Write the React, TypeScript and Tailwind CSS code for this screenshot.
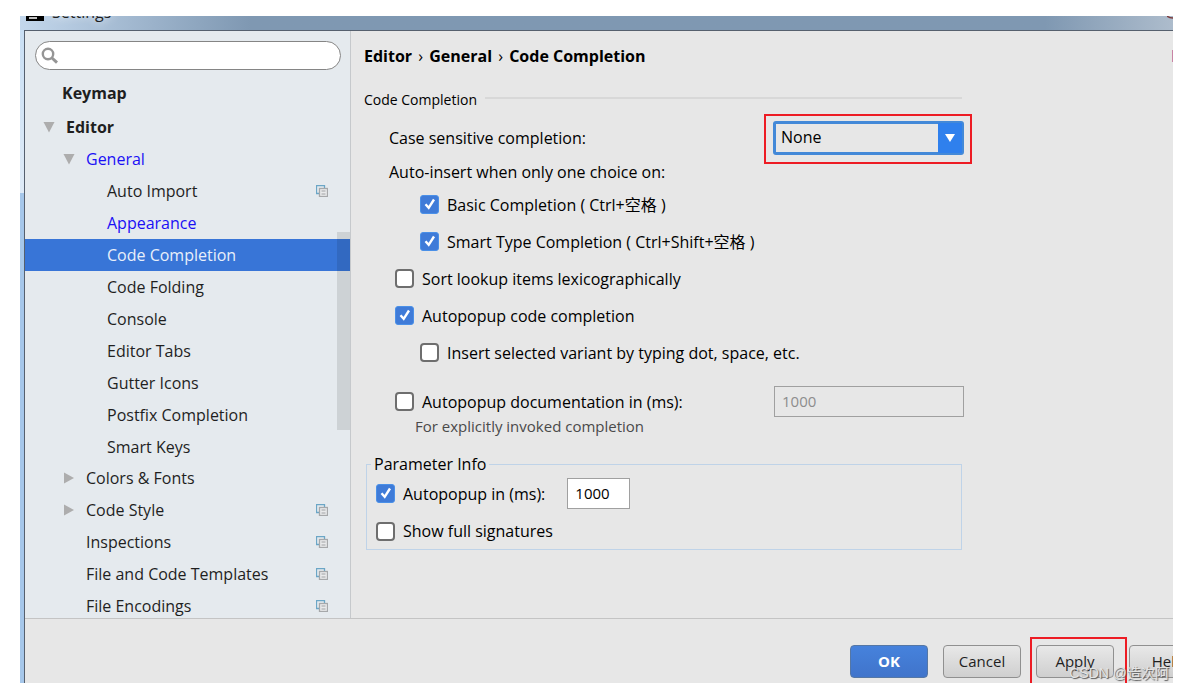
import { ReactNode, useState } from 'react';

type Item = {
  label: string;
  shared?: boolean;
  modified?: boolean;
  arrow?: 'open' | 'closed';
};

const generalPages: Item[] = [
  { label: 'Auto Import', shared: true },
  { label: 'Appearance', modified: true },
  { label: 'Code Completion' },
  { label: 'Code Folding' },
  { label: 'Console' },
  { label: 'Editor Tabs' },
  { label: 'Gutter Icons' },
  { label: 'Postfix Completion' },
  { label: 'Smart Keys' },
];

const editorPages: Item[] = [
  { label: 'Colors & Fonts', arrow: 'closed' },
  { label: 'Code Style', arrow: 'closed', shared: true },
  { label: 'Inspections', shared: true },
  { label: 'File and Code Templates', shared: true },
  { label: 'File Encodings', shared: true },
];

function Arrow({ dir }: { dir: 'open' | 'closed' }) {
  return (
    <svg viewBox="0 0 12 12" className="size-3 shrink-0 fill-[#adadad]">
      {dir === 'open' ? <path d="M0.5 1h11L6 11.5z" /> : <path d="M1 0.5v11L11 6z" />}
    </svg>
  );
}

/* per-project marker at the right of a tree row */
function SharedIcon() {
  return (
    <svg viewBox="0 0 12 12" className="ml-auto mr-[22px] size-3 shrink-0" fill="none">
      <path d="M3 8.5H.5v-8h8V3" stroke="#6ba6c6" strokeWidth="1.3" />
      <rect x="3.5" y="3.5" width="8" height="8" fill="#e9eaeb" stroke="#a6a8aa" strokeWidth="1.3" />
      <path d="M5.5 6h4M5.5 9h4" stroke="#a0a2a4" />
    </svg>
  );
}

function Check({ label, initial = false }: { label: string; initial?: boolean }) {
  const [on, setOn] = useState(initial);
  return (
    <label className="flex items-center gap-2">
      <span className="relative size-[19px] shrink-0">
        <input
          type="checkbox"
          checked={on}
          onChange={() => setOn(!on)}
          className="block size-[19px] appearance-none rounded-[4px] border-2 border-[#6e6e6e] bg-white checked:rounded-[3px] checked:border checked:border-[#4a90e8] checked:bg-[#3f7bd8]"
        />
        {on && (
          <svg viewBox="0 0 19 19" className="pointer-events-none absolute inset-0" fill="none">
            <path d="M5.5 9.2l3.2 3.6L14 4.5" stroke="#fff" strokeWidth="2.4" />
          </svg>
        )}
      </span>
      {label}
    </label>
  );
}

function TreeRow({ item, indent, selected, onSelect }: {
  item: Item;
  indent: string;
  selected?: boolean;
  onSelect: (label: string) => void;
}) {
  return (
    <li className={selected ? 'bg-[#3875d7] text-[#e8effa]' : item.modified ? 'text-[#1a10f5]' : ''}>
      <button
        type="button"
        onClick={() => onSelect(item.label)}
        className={`flex h-8 w-full items-center gap-[11px] text-left ${indent}`}
      >
        {item.arrow && <Arrow dir={item.arrow} />}
        {item.label}
        {item.shared && <SharedIcon />}
      </button>
    </li>
  );
}

function FooterButton({ children, primary }: { children: ReactNode; primary?: boolean }) {
  return (
    <button
      type="button"
      className={`h-[33px] w-[78px] shrink-0 rounded-[4px] border pb-0.5 text-[15px] ${
        primary
          ? 'border-[#5577a5] bg-linear-to-b from-[#4682dc] to-[#4074cb] font-bold text-white'
          : 'border-[#909090] bg-linear-to-b from-[#e8e8e8] to-[#cfcfcf]'
      }`}
    >
      {children}
    </button>
  );
}

export default function App() {
  const [page, setPage] = useState('Code Completion');
  const [delay, setDelay] = useState('1000');

  return (
    <div className="h-screen bg-white pt-4 pr-[11px] pb-[7px] pl-5 font-['Open_Sans','Noto_Sans_CJK_SC',sans-serif] text-[16px] leading-6 text-[#1f1f1f]">
      <div className="relative flex h-full flex-col overflow-hidden">
        {/* title bar */}
        <header className="flex h-[14px] shrink-0 items-start overflow-hidden bg-linear-to-r from-[#c3d7ec] via-[#7f98b2] via-20% to-[#7f98b2] pl-1.5">
          <svg viewBox="0 0 18 18" className="-mt-[13px] size-[18px] shrink-0">
            <path d="M0 0h18v18H0z" />
            <path d="M3 15h8" stroke="#fff" strokeWidth="1.5" />
          </svg>
          <h1 className="-mt-4 ml-2 text-[16px] [text-shadow:0_0_10px_#fff]">Settings</h1>
          <div className="ml-auto h-full w-32 bg-linear-to-r from-transparent to-[#adbccc]" />
          <svg viewBox="0 0 6 4" className="absolute top-0 right-0 h-1 w-1.5" fill="none">
            <path d="M0 0q2 2 6 2" stroke="#7c3b3b" strokeWidth="1.5" />
          </svg>
        </header>

        <div className="flex min-h-0 flex-1">
          <div className="w-1 shrink-0 bg-linear-to-b from-[#c9dff4] from-0% via-[#dfebf7] via-25% to-[#a6c7ea] to-25%" />
          <div className="flex min-w-0 flex-1 flex-col border-t border-l border-[#56606e] bg-[#e7e7e7]">
            <div className="flex min-h-0 flex-1">
              <aside className="relative w-[326px] shrink-0 overflow-hidden border-r border-[#c6c9cc] bg-[#e5eaee]">
                <div className="relative mr-[9px] ml-2.5 mt-2.5">
                  <input
                    type="text"
                    aria-label="Search settings"
                    className="block h-[29px] w-full rounded-full border border-[#858585] bg-white pr-3 pl-8 outline-none"
                  />
                  <svg viewBox="0 0 18 18" className="absolute top-1.5 left-1.5 size-[18px]" fill="none" stroke="#959595">
                    <circle cx="7" cy="7" r="5.2" strokeWidth="2.4" />
                    <path d="M11 11l5 4.6" strokeWidth="3" />
                  </svg>
                </div>

                <ul className="mt-1.5">
                  <li className="mb-0.5 flex h-[33px] items-center pl-[37px] font-bold">Keymap</li>
                  <li className="flex h-8 items-center gap-[11px] pl-[18px] font-bold">
                    <Arrow dir="open" />
                    Editor
                  </li>
                  <TreeRow
                    item={{ label: 'General', arrow: 'open', modified: true }}
                    indent="pl-[38px]"
                    onSelect={setPage}
                  />
                  <li>
                    <ul className="-mb-px">
                      {generalPages.map((it) => (
                        <TreeRow
                          key={it.label}
                          item={it}
                          indent="pl-[82px]"
                          selected={page === it.label}
                          onSelect={setPage}
                        />
                      ))}
                    </ul>
                  </li>
                  {editorPages.map((it) => (
                    <TreeRow
                      key={it.label}
                      item={it}
                      indent={it.arrow ? 'pl-[38px]' : 'pl-[61px]'}
                      selected={page === it.label}
                      onSelect={setPage}
                    />
                  ))}
                </ul>

                {/* scroll thumb */}
                <div className="pointer-events-none absolute top-[201px] right-0 h-[198px] w-[13px] bg-black/10" />
              </aside>

              <main className="min-w-0 flex-1 overflow-hidden pt-[13px] pl-[13px] text-black">
                <div className="flex justify-between font-bold">
                  <h2>
                    Editor <span className="mx-0.5 font-normal">›</span> General{' '}
                    <span className="mx-0.5 font-normal">›</span> Code Completion
                  </h2>
                  <a href="#reset" className="-mr-11 w-[46px] shrink-0 text-[#7c4aa0]">Reset</a>
                </div>

                <div className="max-w-[598px]">
                  <div className="mt-5 flex items-center gap-2 text-[14px]">
                    Code Completion
                    <span className="-mt-1 h-0.5 flex-1 bg-[#d8d8d8]" />
                  </div>

                  <div className="mt-[9px] flex items-center justify-between pl-[25px]">
                    <label htmlFor="case">Case sensitive completion:</label>
                    <div className="relative -mr-0.5">
                      <select
                        id="case"
                        className="block h-[34px] w-[191px] appearance-none rounded-[3px] border-[3px] border-[#4389d8] bg-[#e7e7e7] pb-0.5 pl-[5px] text-[16px] outline-none"
                      >
                        <option>None</option>
                        <option>First letter</option>
                        <option>All</option>
                      </select>
                      <span className="pointer-events-none absolute inset-y-[2px] right-0.5 flex w-6 items-center justify-center bg-[#2f80ed]">
                        <svg viewBox="0 0 10 8" className="h-2 w-2.5 fill-white">
                          <path d="M0 0h10L5 8z" />
                        </svg>
                      </span>
                      <span className="pointer-events-none absolute -top-[7px] -right-2 -bottom-[9px] -left-[9px] border-2 border-[#ed1c24]" />
                    </div>
                  </div>

                  <p className="mt-[5px] pl-[25px]">Auto-insert when only one choice on:</p>

                  <div className="mt-0.5 grid auto-rows-[37px] items-center pl-[31px]">
                    <div className="pl-[25px]"><Check label="Basic Completion ( Ctrl+空格 )" initial /></div>
                    <div className="pl-[25px]"><Check label="Smart Type Completion ( Ctrl+Shift+空格 )" initial /></div>
                    <Check label="Sort lookup items lexicographically" />
                    <Check label="Autopopup code completion" initial />
                    <div className="pl-[25px]"><Check label="Insert selected variant by typing dot, space, etc." /></div>
                  </div>

                  <div className="mt-[15px] flex items-center justify-between pl-[31px]">
                    <Check label="Autopopup documentation in (ms):" />
                    <input
                      type="text"
                      aria-label="Documentation delay"
                      disabled
                      value="1000"
                      className="-mr-0.5 h-[31px] w-[190px] border border-[#a0a0a0] bg-[#e7e7e7] px-[7px] pb-0.5 text-[15px] text-[#8d8d8d]"
                    />
                  </div>
                  <p className="pl-[51px] text-[15px] leading-[18px] text-[#4a4a4a]">For explicitly invoked completion</p>

                  <fieldset className="mt-[19px] ml-0.5 border border-[#bfd3e8] px-[9px] pb-1.5">
                    <legend className="-ml-[5px] px-[3px] leading-5">Parameter Info</legend>
                    <div className="mt-1 flex items-center gap-[22px]">
                      <Check label="Autopopup in (ms):" initial />
                      <input
                        type="text"
                        aria-label="Parameter info delay"
                        value={delay}
                        onChange={(e) => setDelay(e.target.value)}
                        className="h-[31px] w-[63px] border border-[#a0a0a0] bg-white px-[7px] pb-0.5 text-[15px] outline-none"
                      />
                    </div>
                    <div className="mt-2.5"><Check label="Show full signatures" /></div>
                  </fieldset>
                </div>
              </main>
            </div>

            <footer className="flex h-[65px] shrink-0 justify-end gap-[15px] overflow-hidden border-t border-[#c4c4c4] pt-[26px]">
              <FooterButton primary>OK</FooterButton>
              <FooterButton>Cancel</FooterButton>
              <div className="relative">
                <FooterButton>Apply</FooterButton>
                <span className="pointer-events-none absolute -top-2 -right-[13px] -left-1.5 h-16 border-2 border-[#ed1c24]" />
              </div>
              <div className="-mr-[34px]"><FooterButton>Help</FooterButton></div>
            </footer>
          </div>
        </div>

        <span className="pointer-events-none absolute right-1 bottom-0 font-['Liberation_Sans','Noto_Sans_CJK_SC',sans-serif] text-[14px] leading-5 text-[#e4e4e4] [text-shadow:1px_1px_1px_#555]">
          CSDN @造次阿
        </span>
      </div>
    </div>
  );
}
